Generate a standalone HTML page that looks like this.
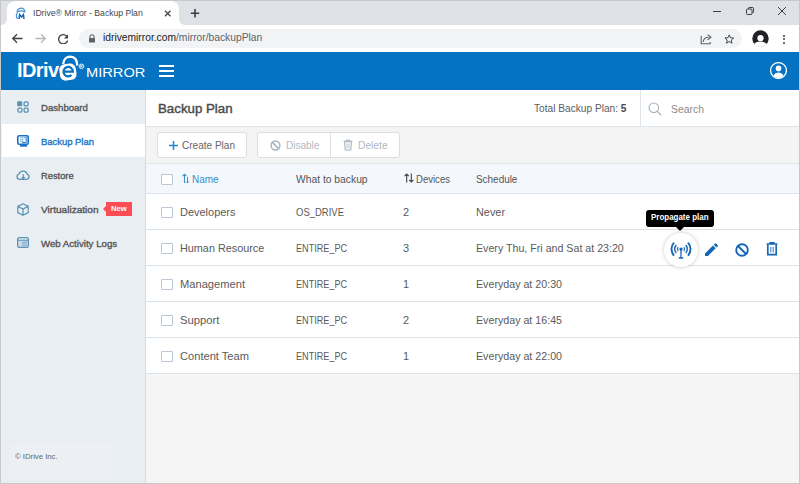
<!DOCTYPE html>
<html><head><meta charset="utf-8">
<style>
*{margin:0;padding:0;box-sizing:border-box}
html,body{width:800px;height:484px;overflow:hidden;background:#f5f5f5;font-family:"Liberation Sans",sans-serif}
.a{position:absolute}
.t{position:absolute;white-space:nowrap;line-height:1}
</style></head><body>
<!-- Chrome tab bar -->
<div class="a" style="left:0;top:17px;width:190px;height:9px;background:#fff"></div>
<div class="a" style="left:0;top:0;width:7px;height:25px;background:#dee1e6;border-bottom-right-radius:6px"></div>
<div class="a" style="left:179px;top:0;width:621px;height:25px;background:#dee1e6;border-bottom-left-radius:6px"></div>
<div class="a" style="left:0;top:0;width:800px;height:8px;background:#dee1e6"></div>
<div class="a" style="left:7px;top:1px;width:172px;height:26px;background:#fff;border-radius:8px 8px 0 0"></div>
<!-- favicon -->
<svg class="a" style="left:15px;top:7px" width="12" height="13" viewBox="0 0 12 13">
 <path d="M2.2 6.2 C1.8 3 3.6 1.2 6 1.2 C8.4 1.2 10.2 3 9.8 5.6" fill="none" stroke="#3a8fd8" stroke-width="1.2"/>
 <path d="M2.2 6.2 C1.2 8 1.2 10.5 2.6 11.8" fill="none" stroke="#3a8fd8" stroke-width="1.2"/>
 <path d="M3.2 4.8 C5 3.6 7.6 3.6 9.6 4.8" fill="none" stroke="#3a8fd8" stroke-width="1.2"/>
 <path d="M4 12 L4.6 7.6 L6.5 10 L8.4 7.6 L9 12" fill="none" stroke="#1565b8" stroke-width="1.5"/>
</svg>
<div class="t" style="transform:scaleX(0.9911);transform-origin:0 0;top:8.64px;left:33px;font-size:8.7px;color:#45484c">IDrive® Mirror - Backup Plan</div>
<svg class="a" style="left:164px;top:10px" width="7.5" height="7" viewBox="0 0 7.5 7"><path d="M1 .8L6.5 6.2M6.5 .8L1 6.2" stroke="#3c4043" stroke-width="1.2"/></svg>
<svg class="a" style="left:190px;top:8px" width="10" height="10" viewBox="0 0 10 10"><path d="M5 1V9.5M.8 5.2H9.2" stroke="#3c4043" stroke-width="1.6"/></svg>
<!-- window controls -->
<div class="a" style="left:713px;top:11px;width:8px;height:1px;background:#3c4043"></div>
<svg class="a" style="left:745px;top:6px" width="10" height="10" viewBox="0 0 10 10"><rect x="1.5" y="3" width="5.5" height="5.5" rx="1" fill="none" stroke="#3c4043" stroke-width="1"/><path d="M3.5 3V2.2Q3.5 1.5 4.2 1.5H7.8Q8.5 1.5 8.5 2.2V5.8Q8.5 6.5 7.8 6.5H7" fill="none" stroke="#3c4043" stroke-width="1"/></svg>
<svg class="a" style="left:777px;top:6px" width="10" height="10" viewBox="0 0 10 10"><path d="M1 1L9 9M9 1L1 9" stroke="#3c4043" stroke-width="1"/></svg>

<!-- address row -->
<div class="a" style="left:0;top:25px;width:800px;height:27px;background:#fff"></div>
<svg class="a" style="left:11px;top:32px" width="13" height="13" viewBox="0 0 13 13"><path d="M11.5 6.5H2M6 2.3L1.8 6.5L6 10.7" fill="none" stroke="#3c4043" stroke-width="1.3"/></svg>
<svg class="a" style="left:34px;top:32px" width="13" height="13" viewBox="0 0 13 13"><path d="M1.5 6.5H11M7 2.3L11.2 6.5L7 10.7" fill="none" stroke="#b4b6b9" stroke-width="1.3"/></svg>
<svg class="a" style="left:57.5px;top:33.5px" width="10.5" height="10.5" viewBox="4 4 16 16"><path d="M17.65 6.35A7.958 7.958 0 0 0 12 4c-4.42 0-7.99 3.58-7.99 8s3.57 8 7.99 8c3.73 0 6.84-2.55 7.73-6h-2.08A5.99 5.99 0 0 1 12 18c-3.31 0-6-2.69-6-6s2.69-6 6-6c1.66 0 3.14.69 4.22 1.78L13 11h7V4l-2.35 2.35z" fill="#3c4043"/></svg>
<div class="a" style="left:79px;top:29px;width:663px;height:19px;background:#f1f3f4;border-radius:10px"></div>
<svg class="a" style="left:87.5px;top:33.5px" width="8" height="9" viewBox="0 0 8 9"><path d="M2 4V2.8A2 2 0 0 1 6 2.8V4" fill="none" stroke="#5f6368" stroke-width="1.1"/><rect x="1" y="4" width="6" height="4.6" rx=".6" fill="#5f6368"/></svg>
<div class="t" style="transform:scaleX(0.9971);transform-origin:0 0;top:33.28px;left:103px;font-size:10.3px;color:#202124">idrivemirror.com<span style="color:#5f6368">/mirror/backupPlan</span></div>
<svg class="a" style="left:700px;top:33px" width="13" height="12" viewBox="0 0 13 12"><path d="M1.2 3V10.8H10.2V9" fill="none" stroke="#5f6368" stroke-width="1.1"/><path d="M3.2 9C3.4 6 5.6 4.2 8.8 4.2" fill="none" stroke="#5f6368" stroke-width="1.1"/><path d="M7.6 1.6L11 4.2L7.6 6.8" fill="none" stroke="#5f6368" stroke-width="1.1" stroke-linejoin="round"/></svg>
<svg class="a" style="left:723.8px;top:34.2px" width="10.5" height="10.5" viewBox="0 0 12 12"><path d="M6 1L7.4 4.3L11 4.6L8.3 6.9L9.1 10.5L6 8.6L2.9 10.5L3.7 6.9L1 4.6L4.6 4.3Z" fill="none" stroke="#3c4043" stroke-width="1.1" stroke-linejoin="round"/></svg>
<svg class="a" style="left:751.5px;top:29.5px" width="17" height="17" viewBox="0 0 17 17"><circle cx="8.5" cy="8.5" r="8.2" fill="#202124"/><circle cx="8.5" cy="8.2" r="3.1" fill="#fff"/><path d="M2.2 14C3.6 12.4 6 11.6 8.5 11.6C11 11.6 13.4 12.4 14.8 14C13.2 15.8 11 17 8.5 17C6 17 3.8 15.8 2.2 14Z" fill="#fff"/></svg>
<div class="a" style="left:782.5px;top:34.5px;width:2px;height:2px;background:#3c4043;border-radius:1px"></div>
<div class="a" style="left:782.5px;top:38px;width:2px;height:2px;background:#3c4043;border-radius:1px"></div>
<div class="a" style="left:782.5px;top:41.5px;width:2px;height:2px;background:#3c4043;border-radius:1px"></div>

<!-- blue header -->
<div class="a" style="left:0;top:52px;width:800px;height:38px;background:#0572c2"></div>
<div class="t" style="top:59.97px;left:17px;font-size:20px;font-weight:bold;color:#fff;letter-spacing:-0.6px">IDriv</div>
<svg class="a" style="left:55px;top:54px" width="32" height="28" viewBox="0 0 32 28">
 <path d="M8.2 10 C8.6 4.8 12 2.6 15.3 2.6 C19.2 2.7 22.2 5.6 22.2 11.5" fill="none" stroke="#fff" stroke-width="2.4"/>
 <rect x="4.6" y="9.9" width="16.6" height="16.4" rx="5.5" fill="#fff" transform="rotate(-8 12.9 18.1)"/>
 <path d="M8.5 17.6H17.9A4.7 4.7 0 1 0 16.5 21" fill="none" stroke="#0572c2" stroke-width="2.2"/>
</svg>
<svg class="a" style="left:78px;top:63px" width="7" height="7" viewBox="0 0 7 7"><circle cx="3.5" cy="3.3" r="2.3" fill="none" stroke="#fff" stroke-width=".85"/><path d="M2.7 4.7V2.1H3.7Q4.4 2.1 4.4 2.75Q4.4 3.4 3.7 3.4H2.7M3.6 3.4L4.4 4.7" fill="none" stroke="#fff" stroke-width=".7"/></svg>
<div class="t" style="transform:scaleX(1.1106);transform-origin:0 0;top:65.73px;left:86px;font-size:13.2px;color:#fff;">MIRROR</div>
<div class="a" style="left:159px;top:65px;width:15px;height:2px;background:#fff"></div>
<div class="a" style="left:159px;top:70px;width:15px;height:2px;background:#fff"></div>
<div class="a" style="left:159px;top:75px;width:15px;height:2px;background:#fff"></div>
<svg class="a" style="left:769.5px;top:61.5px" width="17" height="17" viewBox="0 0 17 17"><circle cx="8.5" cy="8.5" r="7.9" fill="none" stroke="#fff" stroke-width="1.3"/><circle cx="8.5" cy="6.4" r="2.8" fill="#fff"/><path d="M3.4 13.6C4.6 11.6 6.4 10.6 8.5 10.6C10.6 10.6 12.4 11.6 13.6 13.6C12.4 15 10.6 15.9 8.5 15.9C6.4 15.9 4.6 15 3.4 13.6Z" fill="#fff"/></svg>

<!-- sidebar -->
<div class="a" style="left:0;top:90px;width:145px;height:394px;background:#e9eef2"></div>
<div class="a" style="left:145px;top:90px;width:1px;height:394px;background:#d5dce5"></div>
<div class="a" style="left:0;top:124px;width:145px;height:33px;background:#fff"></div>
<!-- dashboard icon -->
<svg class="a" style="left:17px;top:101px" width="12" height="12" viewBox="0 0 12 12"><rect x="0.2" y="0.2" width="5" height="5" rx="1" fill="#5a91b4"/><rect x="7.1" y="0.9" width="4" height="4" rx="1" fill="none" stroke="#5a91b4" stroke-width="1.3"/><rect x="0.9" y="7.1" width="4" height="4" rx="1.3" fill="none" stroke="#5a91b4" stroke-width="1.3"/><rect x="7.1" y="7.1" width="4" height="4" rx="1" fill="none" stroke="#5a91b4" stroke-width="1.3"/></svg>
<div class="t" style="transform:scaleX(0.9992);transform-origin:0 0;top:102.87px;left:41px;font-size:9.6px;color:#555;-webkit-text-stroke:0.35px #555">Dashboard</div>
<svg class="a" style="left:17px;top:135px" width="12" height="12" viewBox="0 0 12 12"><rect x=".8" y=".8" width="10.4" height="8.4" rx="1.2" fill="#fff" stroke="#1c74c4" stroke-width="1.6"/><rect x="3.3" y="2.2" width="1.2" height="1.2" fill="#5f9fd8"/><rect x="3.3" y="4.0" width="1.2" height="1.2" fill="#5f9fd8"/><rect x="3.3" y="5.8" width="1.2" height="1.2" fill="#5f9fd8"/><rect x="5.1" y="2.2" width="1.2" height="1.2" fill="#5f9fd8"/><rect x="5.1" y="4.0" width="1.2" height="1.2" fill="#5f9fd8"/><rect x="5.1" y="5.8" width="1.2" height="1.2" fill="#5f9fd8"/><rect x="6.9" y="2.2" width="1.2" height="1.2" fill="#5f9fd8"/><path d="M9.2 1.8V7.6H5.2" fill="none" stroke="#1c74c4" stroke-width="1"/><rect x="2.9" y="9.4" width="7.2" height="2.3" fill="#1c74c4"/></svg>
<div class="t" style="transform:scaleX(0.9819);transform-origin:0 0;top:137.02px;left:41px;font-size:9.6px;color:#1d74c2;-webkit-text-stroke:0.35px #1d74c2">Backup Plan</div>
<svg class="a" style="left:16px;top:169px" width="14" height="12" viewBox="0 0 14 12"><path d="M3.7 10.3H10.5A2.5 2.5 0 0 0 11.3 5.4A4.3 4.3 0 0 0 3.1 4.8A2.8 2.8 0 0 0 3.7 10.3Z" fill="none" stroke="#5a91b4" stroke-width="1.3"/><path d="M7.2 5.2V9.6M5.7 8.1L7.2 9.6L8.7 8.1" fill="none" stroke="#5a91b4" stroke-width="1.2"/></svg>
<div class="t" style="transform:scaleX(0.9704);transform-origin:0 0;top:171.17px;left:41px;font-size:9.6px;color:#555;-webkit-text-stroke:0.35px #555">Restore</div>
<svg class="a" style="left:17px;top:203px" width="12" height="13" viewBox="0 0 12 13"><path d="M6 .8L11.2 3.4V9.6L6 12.2L.8 9.6V3.4Z M.8 3.4L6 6L11.2 3.4M6 6V12.2" fill="none" stroke="#5a91b4" stroke-width="1.2" stroke-linejoin="round"/></svg>
<div class="t" style="transform:scaleX(1.0518);transform-origin:0 0;top:205.32px;left:41px;font-size:9.6px;color:#555;-webkit-text-stroke:0.35px #555">Virtualization</div>
<div class="a" style="left:106px;top:202px;width:26px;height:14px;background:#fc4d55"></div>
<div class="a" style="left:103px;top:205.5px;width:0;height:0;border-top:3.5px solid transparent;border-bottom:3.5px solid transparent;border-right:3px solid #fc4d55"></div>
<div class="t" style="transform:scaleX(0.9542);transform-origin:0 0;top:205.23px;left:110.8px;font-size:8px;font-weight:bold;color:#fff">New</div>
<svg class="a" style="left:17px;top:237px" width="12" height="11" viewBox="0 0 12 11"><rect x="1.2" y="3.6" width="9.6" height="6.4" fill="#c9dbe7"/><rect x="5" y="4.6" width="5" height="4.4" fill="#8fb4cc"/><path d="M5 6.2H10M5 7.6H10" stroke="#c9dbe7" stroke-width=".5"/><rect x=".6" y=".6" width="10.8" height="9.8" rx="1.6" fill="none" stroke="#5a91b4" stroke-width="1.2"/><path d="M.6 3.2H11.4" stroke="#5a91b4" stroke-width="1.1"/></svg>
<div class="t" style="transform:scaleX(1.0073);transform-origin:0 0;top:239.47px;left:41px;font-size:9.6px;color:#555;-webkit-text-stroke:0.35px #555">Web Activity Logs</div>
<div class="a" style="left:9px;top:442px;width:104px;height:37px;background:#ecf0f4"></div>
<div class="t" style="transform:scaleX(0.9654);transform-origin:0 0;top:453.03px;left:15px;font-size:8px;color:#666">© IDrive Inc.</div>

<!-- page header -->
<div class="a" style="left:146px;top:90px;width:653px;height:36px;background:#fff"></div>
<div class="a" style="left:146px;top:126px;width:653px;height:1px;background:#dfe5ec"></div>
<div class="t" style="transform:scaleX(1.0549);transform-origin:0 0;top:102.93px;left:158px;font-size:12.6px;color:#4a4a4a;-webkit-text-stroke:0.4px #4a4a4a">Backup Plan</div>
<div class="t" style="transform:scaleX(0.9662);transform-origin:0 0;top:102.86px;left:534px;font-size:10.5px;color:#5c5c5c">Total Backup Plan: <b style="color:#484848">5</b></div>
<div class="a" style="left:640px;top:90px;width:1px;height:36px;background:#dfe5ec"></div>
<svg class="a" style="left:648px;top:102px" width="14" height="14" viewBox="0 0 14 14"><circle cx="5.8" cy="5.8" r="4.8" fill="none" stroke="#a9b1b9" stroke-width="1.1"/><path d="M9.3 9.3L13 13" stroke="#a9b1b9" stroke-width="1.2"/></svg>
<div class="t" style="transform:scaleX(0.9915);transform-origin:0 0;top:103.61px;left:671px;font-size:10.5px;color:#8a8a8a">Search</div>

<!-- toolbar -->
<div class="a" style="left:146px;top:127px;width:653px;height:36px;background:#f4f4f4"></div>
<div class="a" style="left:146px;top:163px;width:653px;height:1px;background:#dfe5ec"></div>
<div class="a" style="left:157px;top:132px;width:90px;height:26px;background:#fff;border:1px solid #dadee3;border-radius:3px"></div>
<svg class="a" style="left:169px;top:141px" width="9" height="9" viewBox="0 0 9 9"><path d="M4.5 0V9M0 4.5H9" stroke="#2a8ad0" stroke-width="1.6"/></svg>
<div class="t" style="transform:scaleX(0.9472);transform-origin:0 0;top:140.33px;left:182px;font-size:10.6px;color:#666">Create Plan</div>
<div class="a" style="left:257px;top:132px;width:143px;height:26px;background:#fff;border:1px solid #dadee3;border-radius:3px"></div>
<div class="a" style="left:330px;top:133px;width:1px;height:24px;background:#dadee3"></div>
<svg class="a" style="left:269.5px;top:139.5px" width="11" height="11" viewBox="0 0 11 11"><circle cx="5.5" cy="5.5" r="4.4" fill="none" stroke="#a6b4c1" stroke-width="1.5"/><path d="M2.4 2.4L8.6 8.6" stroke="#a6b4c1" stroke-width="1.5"/></svg>
<div class="t" style="transform:scaleX(0.9450);transform-origin:0 0;top:140.33px;left:286px;font-size:10.6px;color:#b3b9bf">Disable</div>
<svg class="a" style="left:343px;top:139px" width="10" height="12" viewBox="0 0 10 12"><path d="M.5 2.2H9.5M3.5 2V1H6.5V2" fill="none" stroke="#a9b4be" stroke-width="1"/><path d="M1.6 2.8L2.2 11H7.8L8.4 2.8Z" fill="none" stroke="#a9b4be" stroke-width="1.1"/><path d="M4 4.5V9.5M6 4.5V9.5" stroke="#a9b4be" stroke-width=".8"/></svg>
<div class="t" style="transform:scaleX(0.9665);transform-origin:0 0;top:140.33px;left:358px;font-size:10.6px;color:#b3b9bf">Delete</div>

<!-- table -->
<div class="a" style="left:146px;top:164px;width:653px;height:29px;background:#f4f7fc"></div>
<div class="a" style="left:146px;top:193px;width:653px;height:1px;background:#dce3ea"></div>
<div class="a" style="left:161px;top:174px;width:12px;height:11px;background:#fff;border:1px solid #bac6d1;border-radius:1px"></div>
<svg class="a" style="left:182px;top:173px" width="8" height="11" viewBox="0 0 8 11"><path d="M2.5 10V1.2M.5 3.2L2.5 1.2L4.5 3.2" fill="none" stroke="#3a93c8" stroke-width="1.1"/><path d="M5.5 4V10M4.3 8.6L5.5 10L6.7 8.6" fill="none" stroke="#3a93c8" stroke-width="1"/></svg>
<div class="t" style="transform:scaleX(1.0005);transform-origin:0 0;top:174.94px;left:192px;font-size:10px;color:#3a8ec8">Name</div>
<div class="t" style="transform:scaleX(1.0304);transform-origin:0 0;top:174.94px;left:296px;font-size:10px;color:#555">What to backup</div>
<svg class="a" style="left:404px;top:173px" width="10" height="10" viewBox="0 0 10 10"><path d="M2.7 9.5V1M.6 3.1L2.7 1L4.8 3.1M7.3 .5V9M5.2 6.9L7.3 9L9.4 6.9" fill="none" stroke="#444" stroke-width="1.1"/></svg>
<div class="t" style="transform:scaleX(0.9556);transform-origin:0 0;top:174.94px;left:416px;font-size:10px;color:#555">Devices</div>
<div class="t" style="transform:scaleX(0.9927);transform-origin:0 0;top:174.94px;left:476px;font-size:10px;color:#555">Schedule</div>

<div class="a" style="left:146px;top:194px;width:653px;height:179px;background:#fff"></div>
<div class="a" style="left:146px;top:229px;width:653px;height:1px;background:#dce3ea"></div>
<div class="a" style="left:146px;top:265px;width:653px;height:1px;background:#dce3ea"></div>
<div class="a" style="left:146px;top:301px;width:653px;height:1px;background:#dce3ea"></div>
<div class="a" style="left:146px;top:337px;width:653px;height:1px;background:#dce3ea"></div>
<div class="a" style="left:146px;top:373px;width:653px;height:1px;background:#dce3ea"></div>

<div class="a" style="left:161px;top:207px;width:12px;height:11px;border:1px solid #bac6d1;border-radius:1px"></div>
<div class="t" style="transform:scaleX(0.9975);transform-origin:0 0;top:206.69px;left:180px;font-size:11px;color:#5a5a5a">Developers</div>
<div class="t" style="transform:scaleX(0.8627);transform-origin:0 0;top:206.69px;left:296px;font-size:11px;color:#5a5a5a">OS_DRIVE</div>
<div class="t" style="top:206.69px;left:403px;font-size:11px;color:#5a5a5a">2</div>
<div class="t" style="transform:scaleX(0.9883);transform-origin:0 0;top:206.69px;left:476px;font-size:11px;color:#5a5a5a">Never</div>

<div class="a" style="left:161px;top:243px;width:12px;height:11px;border:1px solid #bac6d1;border-radius:1px"></div>
<div class="t" style="transform:scaleX(0.9849);transform-origin:0 0;top:242.69px;left:180px;font-size:11px;color:#5a5a5a">Human Resource</div>
<div class="t" style="transform:scaleX(0.8291);transform-origin:0 0;top:242.69px;left:296px;font-size:11px;color:#5a5a5a">ENTIRE_PC</div>
<div class="t" style="top:242.69px;left:403px;font-size:11px;color:#5a5a5a">3</div>
<div class="t" style="transform:scaleX(0.9681);transform-origin:0 0;top:242.69px;left:476px;font-size:11px;color:#5a5a5a">Every Thu, Fri and Sat at 23:20</div>

<div class="a" style="left:161px;top:279px;width:12px;height:11px;border:1px solid #bac6d1;border-radius:1px"></div>
<div class="t" style="transform:scaleX(1.0122);transform-origin:0 0;top:278.69px;left:180px;font-size:11px;color:#5a5a5a">Management</div>
<div class="t" style="transform:scaleX(0.8291);transform-origin:0 0;top:278.69px;left:296px;font-size:11px;color:#5a5a5a">ENTIRE_PC</div>
<div class="t" style="top:278.69px;left:403px;font-size:11px;color:#5a5a5a">1</div>
<div class="t" style="transform:scaleX(0.9699);transform-origin:0 0;top:278.69px;left:476px;font-size:11px;color:#5a5a5a">Everyday at 20:30</div>

<div class="a" style="left:161px;top:315px;width:12px;height:11px;border:1px solid #bac6d1;border-radius:1px"></div>
<div class="t" style="transform:scaleX(1.0251);transform-origin:0 0;top:314.69px;left:180px;font-size:11px;color:#5a5a5a">Support</div>
<div class="t" style="transform:scaleX(0.8291);transform-origin:0 0;top:314.69px;left:296px;font-size:11px;color:#5a5a5a">ENTIRE_PC</div>
<div class="t" style="top:314.69px;left:403px;font-size:11px;color:#5a5a5a">2</div>
<div class="t" style="transform:scaleX(0.9699);transform-origin:0 0;top:314.69px;left:476px;font-size:11px;color:#5a5a5a">Everyday at 16:45</div>

<div class="a" style="left:161px;top:351px;width:12px;height:11px;border:1px solid #bac6d1;border-radius:1px"></div>
<div class="t" style="transform:scaleX(1.0103);transform-origin:0 0;top:350.69px;left:180px;font-size:11px;color:#5a5a5a">Content Team</div>
<div class="t" style="transform:scaleX(0.8291);transform-origin:0 0;top:350.69px;left:296px;font-size:11px;color:#5a5a5a">ENTIRE_PC</div>
<div class="t" style="top:350.69px;left:403px;font-size:11px;color:#5a5a5a">1</div>
<div class="t" style="transform:scaleX(0.9699);transform-origin:0 0;top:350.69px;left:476px;font-size:11px;color:#5a5a5a">Everyday at 22:00</div>

<!-- row actions -->
<div class="a" style="left:664px;top:233px;width:34px;height:34px;border-radius:50%;background:#fff;box-shadow:0 0 4px rgba(0,0,0,.22)"></div>
<svg class="a" style="left:669px;top:241px" width="24" height="20" viewBox="0 0 24 20">
 <g fill="none" stroke="#1567b6">
 <path d="M5.05 1.6A9.5 9.5 0 0 0 5.05 14.6M18.95 1.6A9.5 9.5 0 0 1 18.95 14.6" stroke-width="1.9"/>
 <path d="M7.25 4.1A6.2 6.2 0 0 0 7.25 12.1M16.75 4.1A6.2 6.2 0 0 1 16.75 12.1" stroke-width="1.6"/>
 <path d="M9.1 6.1A3.6 3.6 0 0 0 9.1 10.1M14.9 6.1A3.6 3.6 0 0 1 14.9 10.1" stroke-width="1.2"/>
 <path d="M12 9V16.5" stroke-width="1.3"/><path d="M9.8 16.9H14.2" stroke-width="1.6"/>
 </g>
 <circle cx="12" cy="8.1" r="1.7" fill="#1567b6"/>
</svg>
<svg class="a" style="left:705px;top:242.5px" width="13" height="13.5" viewBox="3 3 18 18"><path d="M3 17.25V21h3.75L17.81 9.94l-3.75-3.75L3 17.25zM20.71 7.04a.996.996 0 0 0 0-1.41l-2.34-2.34a.996.996 0 0 0-1.41 0l-1.83 1.83 3.75 3.75 1.83-1.83z" fill="#1567b6"/></svg>
<svg class="a" style="left:735px;top:243px" width="14" height="14" viewBox="0 0 14 14"><circle cx="7" cy="7" r="5.8" fill="none" stroke="#1567b6" stroke-width="1.9"/><path d="M3 3L11 11" stroke="#1567b6" stroke-width="1.9"/></svg>
<svg class="a" style="left:766px;top:242px" width="12" height="14" viewBox="0 0 12 14"><path d="M.5 2H11.5M4 1.6V.6H8V1.6" fill="none" stroke="#1567b6" stroke-width="1.3"/><path d="M1.8 2.8V12.6H10.2V2.8" fill="none" stroke="#1567b6" stroke-width="1.7"/><path d="M4.8 5V10.5M7.2 5V10.5" stroke="#1567b6" stroke-width=".9"/></svg>
<!-- tooltip -->
<div class="a" style="left:646px;top:209.5px;width:68px;height:17px;background:#000;border-radius:3px"></div>
<div class="a" style="left:676px;top:226.5px;width:0;height:0;border-left:4.5px solid transparent;border-right:4.5px solid transparent;border-top:4.5px solid #000"></div>
<div class="t" style="transform:scaleX(0.9161);transform-origin:0 0;top:213.34px;left:651px;font-size:8.7px;font-weight:bold;color:#fff">Propagate plan</div>

<!-- screenshot frame -->
<div class="a" style="left:0;top:0;width:800px;height:1px;background:#c8c8c8"></div>
<div class="a" style="left:0;top:0;width:1px;height:484px;background:#c8c8c8"></div>
<div class="a" style="left:799px;top:0;width:1px;height:484px;background:#c8c8c8"></div>
<div class="a" style="left:1px;top:90px;width:1px;height:393px;background:#f1f3f6"></div>
<div class="a" style="left:0;top:483px;width:800px;height:1px;background:#c8c8c8"></div>
</body></html>
